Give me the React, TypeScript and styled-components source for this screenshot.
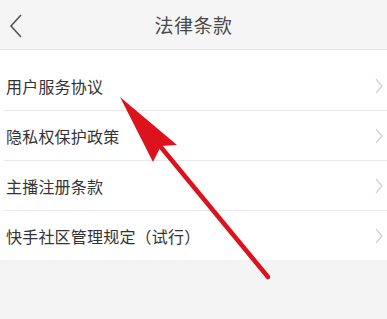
import React from "react";
import styled, { createGlobalStyle } from "styled-components";

const Global = createGlobalStyle`
  html, body { margin: 0; padding: 0; background: #f4f4f4; }
  body { font-family: "Noto Sans CJK SC", "Noto Sans", sans-serif; }
`;

const Page = styled.div`
  position: relative;
  width: 387px;
  height: 319px;
  background: #f4f4f4;
  overflow: hidden;
`;

const Header = styled.header`
  height: 49px;
  border-bottom: 1px solid #e6e6e6;
  background: #f5f5f5;
  display: grid;
  grid-template-columns: 40px 1fr 40px;
  align-items: center;
`;

const Back = styled.div`
  display: flex;
  align-items: center;
  justify-content: center;
  padding-right: 8px;
  padding-top: 2px;
`;

const Title = styled.h1`
  margin: 0;
  text-align: center;
  font-size: 19px;
  font-weight: 400;
  color: #4a4a4a;
  letter-spacing: 0.5px;
`;

const List = styled.ul`
  list-style: none;
  margin: 0;
  padding: 11px 0 0;
  background: #fff;
`;

const Row = styled.li<{ $last?: boolean }>`
  height: 49px;
  margin-left: 4px;
  padding: 0 4px 0 2px;
  display: flex;
  align-items: center;
  justify-content: space-between;
  border-bottom: ${(p) => (p.$last ? "none" : "1px solid #e8e8e8")};
`;

const Label = styled.span`
  font-size: 16px;
  color: #333;
  letter-spacing: 0.2px;
`;

const Arrow = styled.svg`
  position: absolute;
  left: 0;
  top: 0;
  pointer-events: none;
`;

const items = ["用户服务协议", "隐私权保护政策", "主播注册条款", "快手社区管理规定（试行）"];

const Chevron = () => (
  <svg width="8" height="16" viewBox="0 0 8 16">
    <path d="M1 1 L7 8 L1 15" fill="none" stroke="#cfcfcf" strokeWidth="1.2" />
  </svg>
);

export default function App() {
  return (
    <Page>
      <Global />
      <Header>
        <Back>
          <svg width="14" height="24" viewBox="0 0 14 24">
            <path d="M12 1 L2 12 L12 23" fill="none" stroke="#555" strokeWidth="1.6" />
          </svg>
        </Back>
        <Title>法律条款</Title>
        <div />
      </Header>
      <List>
        {items.map((t, i) => (
          <Row key={t} $last={i === items.length - 1}>
            <Label>{t}</Label>
            <Chevron />
          </Row>
        ))}
      </List>
      <Arrow width="387" height="319" viewBox="0 0 387 319">
        <line x1="160" y1="146" x2="268" y2="277" stroke="#dc121c" strokeWidth="4.5" strokeLinecap="round" />
        <polygon points="120,97 177,145 161,146 153,162" fill="#dc121c" />
      </Arrow>
    </Page>
  );
}
